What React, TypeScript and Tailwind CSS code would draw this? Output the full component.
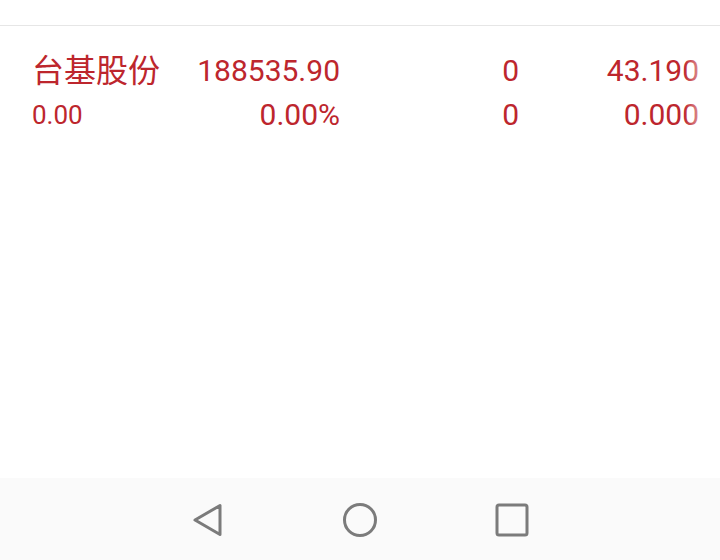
const Row = ({
  name,
  nameClass,
  cols,
}: {
  name: string;
  nameClass: string;
  cols: string[];
}) => (
  <div className="flex items-center h-[44px] pl-[32px]">
    <div className={`w-[128px] whitespace-nowrap ${nameClass}`}>{name}</div>
    <div className="w-[180px] text-right text-[30px]">{cols[0]}</div>
    <div className="w-[179px] text-right text-[30px]">{cols[1]}</div>
    <div className="w-[180px] text-right text-[30px]">{cols[2]}</div>
  </div>
);

const App = () => {
  return (
    <div
      className="w-[720px] h-[560px] flex flex-col bg-white overflow-hidden"
      style={{ fontFamily: '"Roboto", "Noto Sans CJK SC", sans-serif' }}
    >
      <div className="h-[26px] border-b border-[#e6e6e6] shrink-0" />
      {/* quote list */}
      <div className="relative flex-1 pt-[23px] text-[#bd262d] leading-none">
        <Row name="台基股份" nameClass="text-[32px]" cols={["188535.90", "0", "43.190"]} />
        <Row name="0.00" nameClass="text-[26px]" cols={["0.00%", "0", "0.000"]} />
        {/* right edge fade */}
        <div className="absolute top-0 bottom-0 left-[684px] w-[22px] bg-gradient-to-r from-white/0 to-white/70" />
      </div>
      {/* android nav bar */}
      <div className="h-[82px] shrink-0 bg-[#fafafa] flex items-center justify-center gap-[116px] pt-[1px]">
        <svg width="36" height="36" viewBox="0 0 36 36" fill="none">
          <path
            d="M30 3.5 L30 32.5 L5 18 Z"
            stroke="#7b7b7b"
            strokeWidth="3"
            strokeLinejoin="round"
          />
        </svg>
        <svg width="36" height="36" viewBox="0 0 36 36" fill="none">
          <circle cx="18" cy="18" r="15.5" stroke="#7b7b7b" strokeWidth="3" />
        </svg>
        <svg width="36" height="36" viewBox="0 0 36 36" fill="none">
          <rect x="3" y="3" width="30" height="30" rx="2" stroke="#7b7b7b" strokeWidth="3" />
        </svg>
      </div>
    </div>
  );
};

export default App;
